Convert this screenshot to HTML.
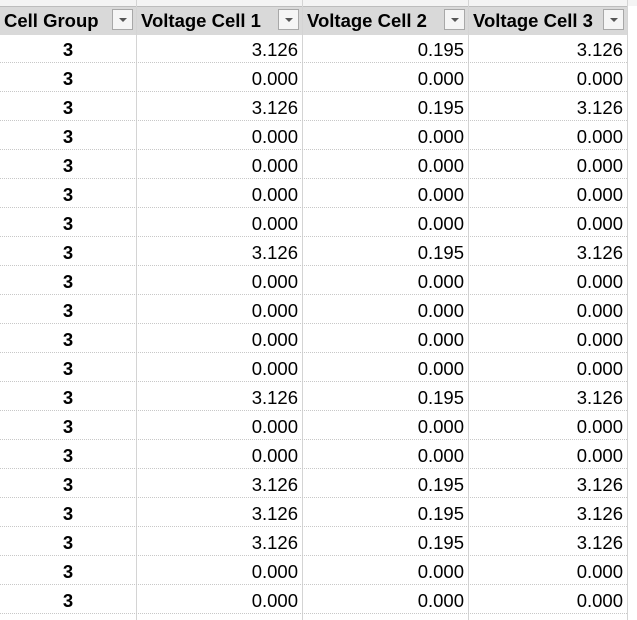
<!DOCTYPE html>
<html><head><style>
body{margin:0;width:637px;height:620px;background:#fff;overflow:hidden;font-family:"Liberation Sans",sans-serif;position:relative}
.top{position:absolute;top:0;left:0;width:637px;height:6px;background:#f4f4f4}
.vl{position:absolute;top:0;width:1px;height:620px;background:#d4d4d4}
.hdr{position:absolute;top:6px;left:0;width:627px;height:28px;background:#d9d9d9;border-top:1px solid #bdbdbd}
.h{position:absolute;top:7px;height:27px;line-height:27px;font-weight:bold;font-size:18.5px;color:#000;padding-left:4px;box-sizing:border-box}
.dd{position:absolute;top:9px;width:21px;height:21px;background:#f5f5f5;border:1px solid #a8a8a8;box-sizing:border-box}
.dd:after{content:"";position:absolute;left:6px;top:8px;border-left:4px solid transparent;border-right:4px solid transparent;border-top:4px solid #555}
.row{position:absolute;left:0;width:627px;height:29px;border-bottom:1px dotted #c8c8c8;box-sizing:border-box}
.c{position:absolute;top:0;height:28px;line-height:32px;font-size:18.5px;color:#000;text-align:right;box-sizing:border-box;padding-right:4px}
</style></head><body>
<div class="top"></div>
<div class="hdr"></div>
<div class="vl" style="left:136px"></div>
<div class="vl" style="left:302px"></div>
<div class="vl" style="left:468px"></div>
<div class="vl" style="left:627px"></div>
<div class="h" style="left:0">Cell Group</div><div class="dd" style="left:112px"></div>
<div class="h" style="left:137px">Voltage Cell 1</div><div class="dd" style="left:278px"></div>
<div class="h" style="left:303px">Voltage Cell 2</div><div class="dd" style="left:444px"></div>
<div class="h" style="left:469px">Voltage Cell 3</div><div class="dd" style="left:603px"></div>
<div id="rows"></div>
<script>
var v=[1,0,1,0,0,0,0,1,0,0,0,0,1,0,0,1,1,1,0,0],h="";
for(var i=0;i<20;i++){var a=v[i]?"3.126":"0.000",b=v[i]?"0.195":"0.000";
h+='<div class="row" style="top:'+(34+i*29)+'px"><div class="c" style="left:0;width:136px;text-align:center;font-weight:bold;padding:0">3</div><div class="c" style="left:137px;width:165px">'+a+'</div><div class="c" style="left:303px;width:165px">'+b+'</div><div class="c" style="left:469px;width:158px">'+a+'</div></div>';}
document.getElementById("rows").innerHTML=h;
</script>
</body></html>
